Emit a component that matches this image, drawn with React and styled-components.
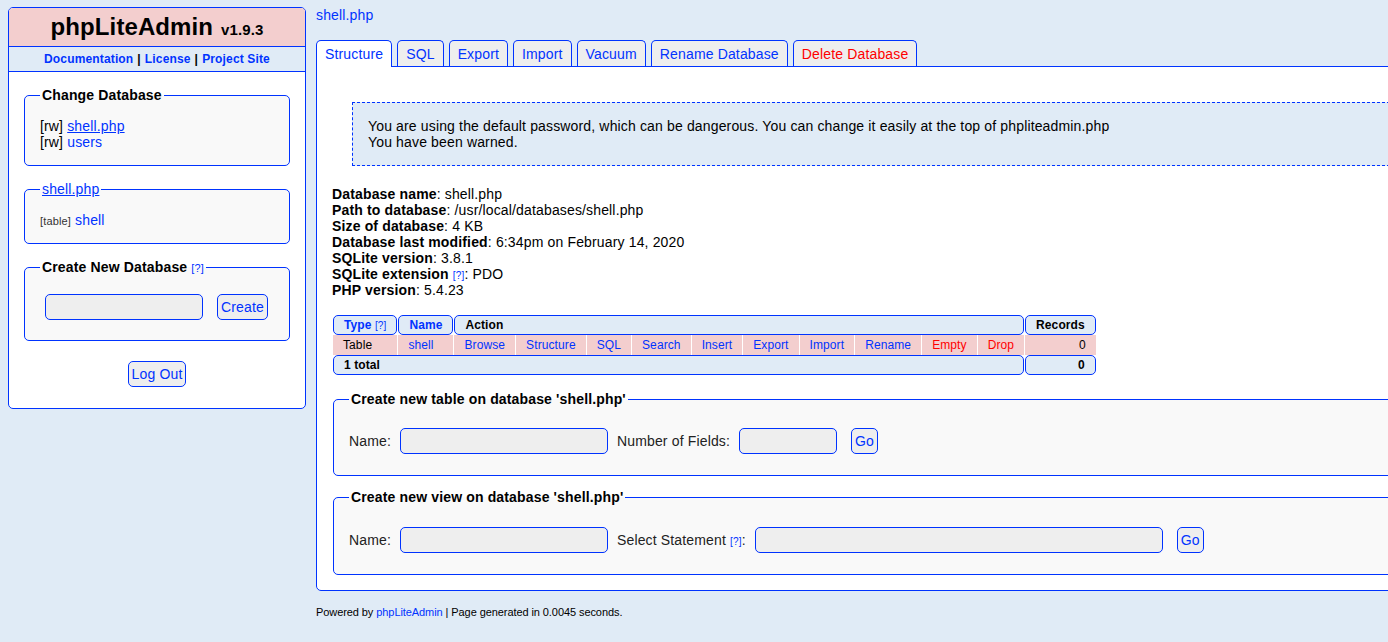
import styled, { createGlobalStyle } from "styled-components"

const Global = createGlobalStyle`
html, body { margin:0; padding:0; overflow:hidden; }
body {
  background:#e0ebf6;
  font-family:"Liberation Sans", Arial, sans-serif;
  font-size:14px;
  line-height:16px;
  letter-spacing:0.15px;
  color:#000;
}
a { color:#03f; text-decoration:none; }
`

const Page = styled.div`
display:flex;
align-items:flex-start;
gap:10px;
padding:7px 0 0 8px;
`

const Sidebar = styled.div`
width:298px;
flex-shrink:0;
box-sizing:border-box;
background:#fff;
border:1px solid #03f;
border-radius:5px;
overflow:hidden;
`

const Title = styled.h1`
margin:0;
height:38px;
display:flex;
align-items:center;
justify-content:center;
gap:8px;
background:#f3cece;
font-size:24px;
font-weight:bold;
letter-spacing:0.1px;
`

const Version = styled.span`
font-size:15px;
padding-top:5px;
`

const SideLinks = styled.div`
height:24px;
display:flex;
align-items:center;
justify-content:center;
background:#e0ebf6;
border-top:1px solid #03f;
border-bottom:1px solid #03f;
font-size:12px;
font-weight:bold;
gap:4px;
`

const SideBody = styled.div`
display:flex;
flex-direction:column;
gap:15px;
padding:15px 15px 21px;
`

const Fieldset = styled.fieldset`
margin:0;
padding:0 15px ${p => p.$pb || 15}px;
border:1px solid #03f;
border-radius:5px;
background:#f9f9f9;
min-width:0;
`

const Legend = styled.legend`
padding:0 2px;
font-weight:${p => (p.$plain ? "normal" : "bold")};
font-size:14px;
line-height:16px;
`

const Help = styled.a`
font-size:${p => p.$size || 10}px;
line-height:10px;
font-weight:normal;
`

const FsContent = styled.div`
padding-top:15px;
`

const Line = styled.div`
height:16px;
line-height:16px;
`

const DbLink = styled.a`
text-decoration:${p => (p.$active ? "underline" : "none")};
`

const Small = styled.span`
font-size:11px;
line-height:11px;
color:#333;
`

const InlineRow = styled.div`
display:flex;
align-items:center;
gap:${p => p.$gap || 9}px;
padding:${p => p.$pad || "5px 0 5px 0"};
`

const Input = styled.input`
box-sizing:border-box;
width:${p => p.$w}px;
height:26px;
margin:0;
background:#eee;
border:1px solid #03f;
border-radius:5px;
`

const Button = styled.button`
box-sizing:border-box;
height:26px;
margin:0 0 0 ${p => p.$ml || 0}px;
padding:0 3px;
background:#eee;
border:1px solid #03f;
border-radius:5px;
color:#03f;
font-family:"Liberation Sans", Arial, sans-serif;
font-size:14px;
letter-spacing:0.15px;
`

const Centered = styled.div`
display:flex;
justify-content:center;
padding-top:5px;
`

const Main = styled.div`
width:1200px;
flex-shrink:0;
`

const DbTitle = styled.div`
line-height:16px;
`

const Tabs = styled.div`
display:flex;
align-items:flex-end;
gap:5px;
margin-top:17px;
`

const Tab = styled.a`
position:relative;
z-index:${p => (p.$active ? 2 : 1)};
padding:5px 8px ${p => (p.$active ? 5 : 4)}px;
margin-bottom:${p => (p.$active ? -1 : 0)}px;
background:${p => (p.$active ? "#fff" : "#eee")};
color:${p => (p.$danger ? "#f00" : "#03f")};
border:1px solid #03f;
border-bottom:none;
border-radius:5px 5px 0 0;
line-height:16px;
`

const Panel = styled.div`
background:#fff;
border:1px solid #03f;
border-radius:0 5px 5px 5px;
padding:15px;
`

const Notice = styled.div`
margin:20px 20px 20px;
padding:15px;
background:#e0ebf6;
border:1px dashed #03f;
`

const InfoLine = styled.div`
height:16px;
line-height:16px;
`

const Table = styled.table`
margin-top:17px;
border-collapse:separate;
border-spacing:1px 0;
font-size:12px;
line-height:14px;
letter-spacing:0.1px;
`

const Th = styled.td`
padding:2px 10px;
border:1px solid #03f;
border-radius:5px;
background:#e0ebf6;
font-weight:bold;
text-align:${p => p.$align || "left"};
color:${p => (p.$link ? "#03f" : "#000")};
`

const Td = styled.td`
padding:3px 10px;
background:#f3cece;
text-align:${p => p.$align || "left"};
color:${p => (p.$danger ? "#f00" : p.$link ? "#03f" : "#000")};
`

const FormSet = styled(Fieldset)`
margin:${p => p.$mt}px 0 0 1px;
padding:0 15px 16px;
`

const Label = styled.span`
color:#222;
white-space:nowrap;
`

const Footer = styled.div`
margin-top:15px;
font-size:11px;
line-height:13px;
letter-spacing:-0.08px;
`

const actions = ["Browse", "Structure", "SQL", "Search", "Insert", "Export", "Import", "Rename", "Empty", "Drop"]
const tabs = ["Structure", "SQL", "Export", "Import", "Vacuum", "Rename Database", "Delete Database"]
const info = [
  ["Database name", "shell.php"],
  ["Path to database", "/usr/local/databases/shell.php"],
  ["Size of database", "4 KB"],
  ["Database last modified", "6:34pm on February 14, 2020"],
  ["SQLite version", "3.8.1"],
  ["SQLite extension", "PDO", true],
  ["PHP version", "5.4.23"],
]

export default function App() {
  return (
    <>
      <Global />
      <Page>
        <Sidebar>
          <Title>phpLiteAdmin <Version>v1.9.3</Version></Title>
          <SideLinks>
            <a>Documentation</a>|<a>License</a>|<a>Project Site</a>
          </SideLinks>
          <SideBody>
            <Fieldset>
              <Legend>Change Database</Legend>
              <FsContent>
                <Line>[rw] <DbLink $active>shell.php</DbLink></Line>
                <Line>[rw] <DbLink>users</DbLink></Line>
              </FsContent>
            </Fieldset>
            <Fieldset>
              <Legend $plain><DbLink $active>shell.php</DbLink></Legend>
              <FsContent>
                <Line><Small>[table]</Small> <a>shell</a></Line>
              </FsContent>
            </Fieldset>
            <Fieldset $pb={15}>
              <Legend>Create New Database <Help $size={11}>[?]</Help></Legend>
              <InlineRow $gap={14} $pad="19px 0 5px 5px">
                <Input $w={158} />
                <Button>Create</Button>
              </InlineRow>
            </Fieldset>
            <Centered>
              <Button>Log Out</Button>
            </Centered>
          </SideBody>
        </Sidebar>

        <Main>
          <DbTitle><a>shell.php</a></DbTitle>
          <Tabs>
            {tabs.map((t, i) => (
              <Tab key={t} $active={i === 0} $danger={t === "Delete Database"}>{t}</Tab>
            ))}
          </Tabs>
          <Panel>
            <Notice>
              You are using the default password, which can be dangerous. You can change it easily at the top of phpliteadmin.php<br />
              You have been warned.
            </Notice>
            {info.map(([k, v, help]) => (
              <InfoLine key={k}>
                <b>{k}</b>{help && <> <Help>[?]</Help></>}: {v}
              </InfoLine>
            ))}
            <Table>
              <tbody>
                <tr>
                  <Th $link>Type <Help>[?]</Help></Th>
                  <Th $link>Name</Th>
                  <Th colSpan={10}>Action</Th>
                  <Th $align="center">Records</Th>
                </tr>
                <tr>
                  <Td>Table</Td>
                  <Td $link>shell</Td>
                  {actions.map(a => (
                    <Td key={a} $link $danger={a === "Empty" || a === "Drop"}>{a}</Td>
                  ))}
                  <Td $align="right">0</Td>
                </tr>
                <tr>
                  <Th colSpan={12}>1 total</Th>
                  <Th $align="right">0</Th>
                </tr>
              </tbody>
            </Table>
            <FormSet $mt={16}>
              <Legend>Create new table on database 'shell.php'</Legend>
              <InlineRow $pad="21px 0 5px 0">
                <Label>Name:</Label>
                <Input $w={208} />
                <Label>Number of Fields:</Label>
                <Input $w={98} />
                <Button $ml={5}>Go</Button>
              </InlineRow>
            </FormSet>
            <FormSet $mt={13}>
              <Legend>Create new view on database 'shell.php'</Legend>
              <InlineRow $pad="22px 0 5px 0">
                <Label>Name:</Label>
                <Input $w={208} />
                <Label>Select Statement <Help>[?]</Help>:</Label>
                <Input $w={408} />
                <Button $ml={5}>Go</Button>
              </InlineRow>
            </FormSet>
          </Panel>
          <Footer>
            Powered by <a>phpLiteAdmin</a> | Page generated in 0.0045 seconds.
          </Footer>
        </Main>
      </Page>
    </>
  )
}
